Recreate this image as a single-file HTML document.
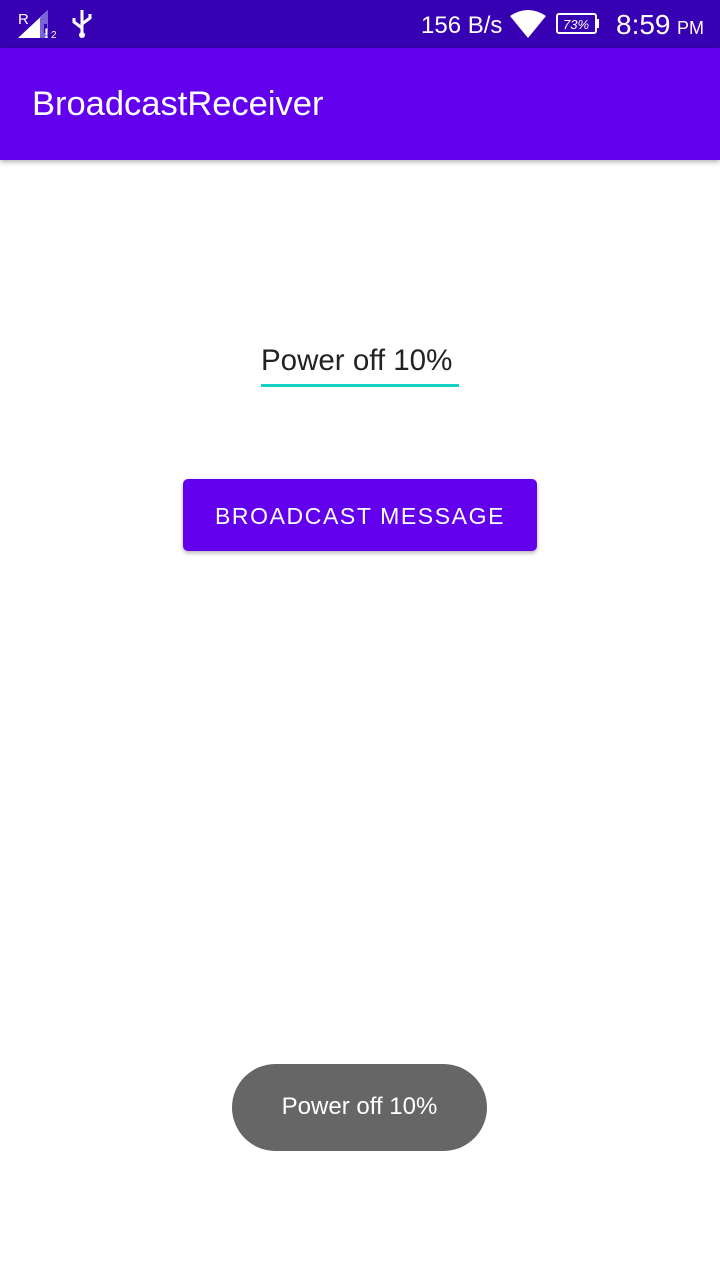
<!DOCTYPE html>
<html><head><style>
body{margin:0;width:720px;height:1280px;background:#fff;font-family:"Liberation Sans",sans-serif;position:relative;overflow:hidden}
.sb{position:absolute;top:0;left:0;width:720px;height:48px;background:#3700b3;color:#fff}
.ab{position:absolute;top:48px;left:0;width:720px;height:112px;background:#6200ee;box-shadow:0 2px 5px rgba(0,0,0,.3)}
.ab span{position:absolute;left:32px;top:37px;font-size:34.5px;color:#fff}
</style></head><body>
<div class="sb">
<svg width="720" height="48" style="position:absolute;left:0;top:0">
<text x="18" y="24" fill="#fff" font-size="15" font-family="Liberation Sans">R</text>
<polygon points="18,38 48,38 48,10" fill="#fff"/>
<polygon points="40,18 48,10 48,38 40,38" fill="#7a63d6"/>
<rect x="44" y="24" width="3" height="9" fill="#3700b3"/>
<text x="44" y="38" fill="#fff" font-size="14" font-weight="bold">!</text>
<text x="51" y="38" fill="#fff" font-size="10">2</text>
<path d="M82 10 V34 M82 28 L74 22 V18 M82 24 L90 18 V14" stroke="#fff" stroke-width="3" fill="none"/>
<circle cx="82" cy="35" r="3" fill="#fff"/>
<text x="421" y="33" fill="#fff" font-size="24">156 B/s</text>
<path d="M510 16 Q528 4 546 16 L528 38 Z" fill="#fff"/>
<rect x="557" y="14" width="39" height="19" rx="2" fill="none" stroke="#fff" stroke-width="2"/>
<rect x="596" y="19" width="3" height="9" fill="#fff"/>
<text x="563" y="29" fill="#fff" font-size="13" font-style="italic">73%</text>
<text x="616" y="34" fill="#fff" font-size="28">8:59</text>
<text x="677" y="34" fill="#fff" font-size="18">PM</text>
</svg>
</div>
<div class="ab"><span>BroadcastReceiver</span></div>
<div style="position:absolute;left:261px;top:344px;font-size:29.5px;color:#222">Power off 10%</div>
<div style="position:absolute;left:261px;top:384px;width:198px;height:3px;background:#14d2c4"></div>
<div style="position:absolute;left:183px;top:479px;width:354px;height:72px;background:#6200ee;border-radius:5px;box-shadow:0 2px 4px rgba(0,0,0,.3);color:#fff;font-size:23px;letter-spacing:1.6px;line-height:74px;text-align:center">BROADCAST MESSAGE</div>
<div style="position:absolute;left:232px;top:1064px;width:255px;height:87px;background:#666;border-radius:44px;color:#fff;font-size:24px;text-align:center;line-height:86px">Power off 10%</div>
</body></html>
